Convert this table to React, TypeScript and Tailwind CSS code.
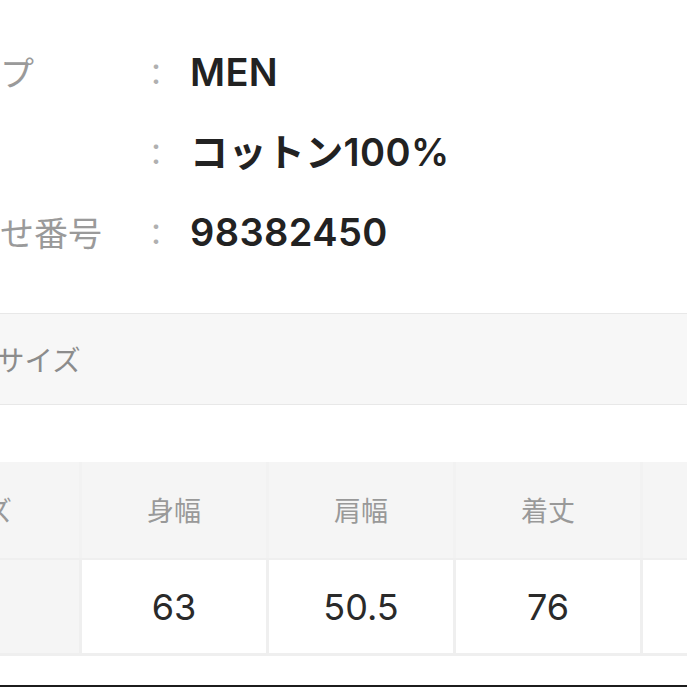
import React from 'react';

// Product detail rows + size table (the screenshot is a crop, so the left edge sits offscreen)
const details = [
  { label: '性別・タイプ', value: 'MEN' },
  { label: '素材', value: 'コットン100%' },
  { label: 'お問い合わせ番号', value: '98382450' },
];

const sizeHeads = ['サイズ', '身幅', '肩幅', '着丈', '袖丈'];
const sizeValues = ['F', '63', '50.5', '76', '24'];

const jp = "font-['Inter','Noto_Sans_CJK_JP',sans-serif]";

export default function App() {
  return (
    <div className="w-[687px] h-[687px] overflow-hidden bg-white">
      <div className={`-ml-[167px] w-[1100px] ${jp}`}>
        {/* Spec rows */}
        <div className="pt-[32px]">
          {details.map(d => (
            <div key={d.label} className="h-[80px] flex items-center">
              <div className="w-[305px] -ml-[3px] pl-0 text-[34px] text-[#9a9a9a] whitespace-nowrap font-['Noto_Sans_CJK_JP',sans-serif] leading-none">
                {d.label}
              </div>
              <div className="w-[36px] ml-[3px] text-center text-[30px] text-[#b0b0b0] font-['Noto_Sans_CJK_JP',sans-serif] leading-none">：</div>
              <div className="ml-[16px] text-[38px] font-semibold tracking-[0.4px] text-[#222] leading-none whitespace-nowrap">{d.value}</div>
            </div>
          ))}
        </div>

        {/* Section heading */}
        <div className="mt-[41px] h-[92px] flex items-center border-y border-[#e8e8e8] bg-[#f7f7f7] pl-[106px]">
          <span className="text-[28.5px] text-[#8c8c8c] font-['Noto_Sans_CJK_JP',sans-serif]">商品サイズ</span>
        </div>

        {/* Size table */}
        <div className="mt-[57px] ml-[32px] w-fit grid grid-cols-[214px_184px_184px_184px_184px] grid-rows-[96px_93px] gap-y-[2px] pb-[3px] bg-[#efefef]">
          <div className="col-span-5 grid grid-cols-[214px_184px_184px_184px_184px] gap-x-[3px] bg-[#f2f2f2]">
            {sizeHeads.map(h => (
              <div key={h} className="bg-[#f5f5f5] flex items-center justify-center text-[27px] text-[#999] font-['Noto_Sans_CJK_JP',sans-serif]">
                {h}
              </div>
            ))}
          </div>
          <div className="col-span-5 grid grid-cols-[214px_184px_184px_184px_184px] gap-x-[3px]">
            {sizeValues.map((v, i) => (
              <div
                key={i}
                className={[
                  'flex items-center justify-center text-[36px] text-[#2a2a2a]',
                  i === 0 ? 'bg-[#f5f5f5]' : 'bg-white',
                ].join(' ')}
              >
                {v}
              </div>
            ))}
          </div>
        </div>

        <div className="mt-[29px] h-[3px] bg-[#1c1c1c]" />
      </div>
    </div>
  );
}
